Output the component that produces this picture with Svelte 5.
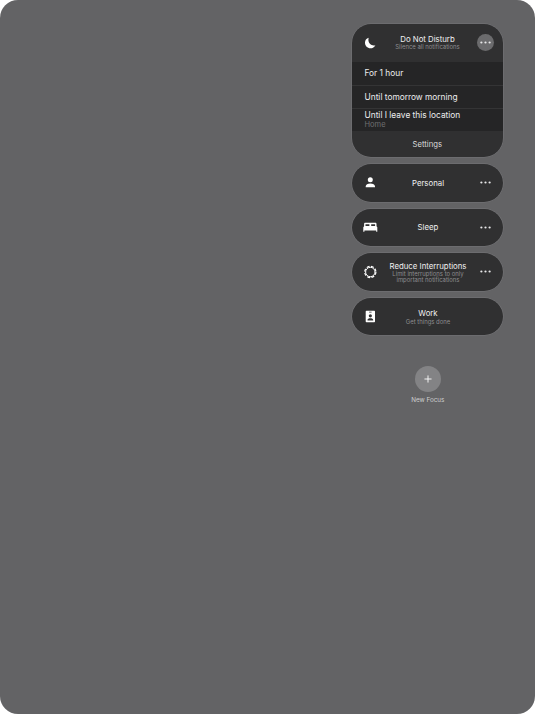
<script>
  const focuses = [
    { id: 'personal', title: 'Personal', more: true },
    { id: 'sleep', title: 'Sleep', more: true },
    { id: 'reduce', title: 'Reduce Interruptions', sub: ['Limit interruptions to only', 'important notifications'], more: true },
    { id: 'work', title: 'Work', sub: ['Get things done'], more: false }
  ];
</script>

{#snippet dots()}
  <svg class="dots" viewBox="0 0 12 3" aria-hidden="true">
    <circle cx="1.5" cy="1.5" r="1.2" /><circle cx="6" cy="1.5" r="1.2" /><circle cx="10.5" cy="1.5" r="1.2" />
  </svg>
{/snippet}

<main class="screen">
  <div class="stack">
    <section class="panel">
      <header class="head">
        <svg class="icon" viewBox="0 0 20 20" aria-hidden="true">
          <path fill="#fff" d="M8.700 4.700C6.300 5.300 5 7.300 5 9.800c0 3 2.400 5.500 5.400 5.500 2.200 0 4.100-1.200 5-3.100-.5.100-1 .2-1.500.2-3.100 0-5.500-2.400-5.500-5.400 0-.9.100-1.600.3-2.300z" />
        </svg>
        <div class="text">
          <div class="title">Do Not Disturb</div>
          <div class="sub">Silence all notifications</div>
        </div>
        <button class="more on" aria-label="More">{@render dots()}</button>
      </header>
      <ul class="menu">
        <li>For 1 hour</li>
        <li>Until tomorrow morning</li>
        <li class="two">Until I leave this location<span>Home</span></li>
      </ul>
      <div class="settings">Settings</div>
    </section>

    {#each focuses as f}
      <section class="pill">
        {#if f.id === 'personal'}
          <svg class="icon" viewBox="0 0 20 20" aria-hidden="true">
            <circle cx="10.300" cy="6.800" r="2.500" fill="#fff" />
            <path fill="#fff" d="M5.700 14.300v-.9c0-2 2-3 4.600-3s4.700 1 4.700 3v.9z" />
          </svg>
        {:else if f.id === 'sleep'}
          <svg class="icon" viewBox="0 0 20 20" aria-hidden="true">
            <path fill="#fff" fill-rule="evenodd" d="M5.300 5.700h10c.8 0 1.200.4 1.200 1.200v2.300l.8 1.100v4.400h-1.100v-1.300H4.400v1.300H3.300v-4.400l.8-1.100V6.900c0-.8.4-1.200 1.200-1.200zM5.500 7.200v1.800h3.900V7.200zM11.200 7.200v1.800h3.900V7.200z" />
          </svg>
        {:else if f.id === 'reduce'}
          <svg class="icon" viewBox="0 0 20 20" aria-hidden="true">
            <circle cx="10.300" cy="10" r="4.700" fill="none" stroke="#fff" stroke-width="1" />
            <circle cx="10.300" cy="10" r="5.600" fill="none" stroke="#fff" stroke-width="1.200" stroke-dasharray="2.900 1.500" />
          </svg>
        {:else}
          <svg class="icon" viewBox="0 0 20 20" aria-hidden="true">
            <path fill="#fff" fill-rule="evenodd" d="M6.400 4.700h7.900c.4 0 .7.300.7.700v10.200c0 .4-.3.7-.7.700H6.400c-.4 0-.7-.3-.7-.7V5.400c0-.4.3-.7.7-.7zM9.100 5.800v.8h2.500v-.8zM10.350 8.200a1.600 1.600 0 1 0 0 3.200 1.600 1.600 0 0 0 0-3.200zM7.500 14.600h5.700v-.7c0-1-1.200-1.600-2.850-1.600s-2.850.6-2.850 1.600z" />
          </svg>
        {/if}
        <div class="text">
          <div class="title">{f.title}</div>
          {#if f.sub}
            {#each f.sub as s}<div class="sub">{s}</div>{/each}
          {/if}
        </div>
        {#if f.more}
          <button class="more" aria-label="More">{@render dots()}</button>
        {:else}
          <span class="more" aria-hidden="true"></span>
        {/if}
      </section>
    {/each}

    <div class="new">
      <button class="plus" aria-label="New Focus">
        <svg viewBox="0 0 9 9" aria-hidden="true"><path d="M4.500 .5v8M.5 4.500h8" stroke="#fff" stroke-width="1" fill="none" /></svg>
      </button>
      <div class="label">New Focus</div>
    </div>
  </div>
</main>

<style>
  :global(html), :global(body) {
    margin: 0;
    background: #fff;
  }
  .screen {
    width: 535px;
    height: 714px;
    border-radius: 18px;
    background: #636365;
    overflow: hidden;
    display: flex;
    justify-content: flex-end;
    box-sizing: border-box;
    padding: 24px 32px 0 0;
    font-family: Inter, "Liberation Sans", sans-serif;
    color: #fff;
  }
  .stack {
    width: 151.500px;
    display: flex;
    flex-direction: column;
    gap: 7px;
  }
  .panel {
    background: #303031;
    border-radius: 19px;
    overflow: hidden;
    height: 133px;
    box-shadow: 0 0 0 .5px #77777a;
    display: flex;
    flex-direction: column;
  }
  .head, .pill {
    display: flex;
    align-items: center;
    flex: none;
    padding: 0 9.500px 0 8.500px;
    box-sizing: border-box;
  }
  .head {
    height: 38px;
    padding-bottom: 1px;
  }
  .pill {
    height: 37.500px;
    background: #303031;
    border-radius: 19px;
    box-shadow: 0 0 0 .5px #77777a;
  }
  .icon {
    width: 20px;
    height: 20px;
    flex: none;
    display: block;
  }
  .text {
    flex: 1;
    min-width: 0;
    text-align: center;
    padding-right: 1.500px;
  }
  .pill .text {
    padding-top: 1px;
  }
  .title {
    font-size: 7.800px;
    line-height: 9.500px;
    color: #efeff0;
    white-space: nowrap;
  }
  .sub {
    font-size: 5.950px;
    line-height: 6px;
    color: #8d8d90;
    white-space: nowrap;
  }
  .more {
    width: 16px;
    height: 16px;
    flex: none;
    border: 0;
    padding: 0;
    border-radius: 50%;
    background: transparent;
    display: flex;
    align-items: center;
    justify-content: center;
  }
  .more.on {
    background: #6b6b6d;
    width: 17px;
    height: 17px;
  }
  .dots {
    width: 11px;
    height: 3px;
    fill: #e8e8e9;
    display: block;
  }
  .menu {
    list-style: none;
    margin: 0;
    padding: 0;
    background: #252526;
    height: 69px;
    flex: none;
  }
  .menu li {
    height: 23px;
    box-sizing: border-box;
    padding: 0 13px;
    font-size: 8.350px;
    line-height: 22.500px;
    color: #ececed;
    border-top: .5px solid #343435;
    white-space: nowrap;
  }
  .menu li:first-child {
    border-top: 0;
    line-height: 23.500px;
  }
  .menu li.two {
    line-height: 10px;
    padding-top: .5px;
  }
  .menu li span {
    display: block;
    font-size: 7.500px;
    line-height: 9px;
    color: #707072;
  }
  .settings {
    flex: 1;
    display: flex;
    align-items: center;
    justify-content: center;
    font-size: 7.700px;
    color: #dcdcdd;
  }
  .new {
    margin-top: 24px;
    padding-left: 1px;
    display: flex;
    flex-direction: column;
    align-items: center;
    gap: 4px;
  }
  .plus {
    width: 26px;
    height: 26px;
    border-radius: 50%;
    border: 0;
    padding: 0;
    background: #838385;
    display: flex;
    align-items: center;
    justify-content: center;
  }
  .plus svg {
    width: 8px;
    height: 8px;
    display: block;
  }
  .label {
    font-size: 6.300px;
    line-height: 9px;
    color: #cfcfd0;
  }
</style>
